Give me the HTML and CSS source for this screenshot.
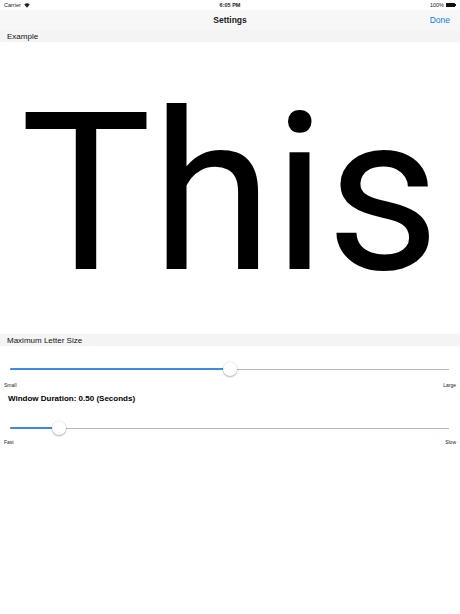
FILE: index.html
```html
<!DOCTYPE html>
<html>
<head>
<meta charset="utf-8">
<link rel="stylesheet" href="styles.css">
</head>
<body>
<div class="status">
  <div class="status-left">Carrier
    <svg class="wifi" width="6" height="5" viewBox="0 0 12 10"><path d="M6 9.5 L0.5 3.2 A8 8 0 0 1 11.5 3.2 Z" fill="#222"/></svg>
  </div>
  <div class="status-time">6:05 PM</div>
  <div class="status-right">100% <span class="battery"><span class="battery-body"></span><span class="battery-nub"></span></span></div>
</div>
<div class="nav">
  <div class="nav-title">Settings</div>
  <div class="nav-done">Done</div>
</div>
<div class="section-header">Example</div>
<div class="example"><span class="example-text">This</span></div>
<div class="section-header">Maximum Letter Size</div>
<div class="slider slider-first">
  <div class="track"></div>
  <div class="fill" style="width:50%"></div>
  <div class="thumb" style="left:50%"></div>
</div>
<div class="labels labels-first"><span>Small</span><span>Large</span></div>
<div class="duration">Window Duration: 0.50 (Seconds)</div>
<div class="slider slider-second">
  <div class="track"></div>
  <div class="fill" style="width:11.2%"></div>
  <div class="thumb" style="left:11.2%"></div>
</div>
<div class="labels"><span>Fast</span><span>Slow</span></div>
</body>
</html>
```
FILE: styles.css
```css
html, body {
  margin: 0;
  padding: 0;
  background: #fff;
}
body {
  width: 460px;
  height: 614px;
  font-family: "Liberation Sans", Arial, sans-serif;
  color: #000;
  overflow: hidden;
}
.status {
  height: 10px;
  display: flex;
  align-items: center;
  justify-content: space-between;
  padding: 0 4px 0 4px;
  font-size: 5.5px;
  color: #222;
  position: relative;
}
.status-left {
  display: flex;
  align-items: center;
  gap: 3px;
}
.status-time {
  position: absolute;
  left: 0;
  right: 0;
  text-align: center;
  font-weight: bold;
}
.status-right {
  display: flex;
  align-items: center;
  gap: 2px;
}
.battery {
  display: flex;
  align-items: center;
}
.battery-body {
  width: 9px;
  height: 4px;
  background: #111;
  border-radius: 0.5px;
}
.battery-nub {
  width: 1px;
  height: 2px;
  background: #111;
}
.nav {
  height: 20px;
  background: #f7f7f7;
  display: flex;
  align-items: center;
  justify-content: flex-end;
  position: relative;
  padding-right: 10px;
}
.nav-title {
  position: absolute;
  left: 0;
  right: 0;
  text-align: center;
  font-size: 8.5px;
  font-weight: bold;
  color: #1a1a1a;
}
.nav-done {
  font-size: 8.5px;
  color: #0a7bff;
  position: relative;
}
.section-header {
  height: 12px;
  line-height: 13px;
  background: #f4f4f4;
  font-size: 8px;
  padding-left: 7px;
  color: #111;
}
.example {
  height: 292px;
  text-align: center;
  overflow: hidden;
}
.example-text {
  display: block;
  font-family: Roboto, "Liberation Sans", sans-serif;
  font-size: 220px;
  line-height: 220px;
  margin-top: 42px;
  margin-left: 0;
}
.slider {
  position: relative;
  height: 20px;
  margin: 0 11px 0 10px;
}
.slider-first {
  margin-top: 13px;
}
.slider-second {
  margin-top: 14px;
}
.track {
  position: absolute;
  left: 0;
  right: 0;
  top: 9.5px;
  height: 1px;
  background: #b7b7b7;
}
.fill {
  position: absolute;
  left: 0;
  top: 9px;
  height: 2px;
  background: #3a8be6;
  border-radius: 1px;
}
.thumb {
  position: absolute;
  top: 3px;
  width: 14px;
  height: 14px;
  margin-left: -7px;
  border-radius: 50%;
  background: #fff;
  box-shadow: 0 1px 2px rgba(0,0,0,0.3), 0 0 0 0.5px rgba(0,0,0,0.08);
}
.labels {
  height: 8px;
  line-height: 8px;
  display: flex;
  justify-content: space-between;
  padding: 0 4px;
  font-size: 5px;
  color: #222;
}
.labels-first {
  margin-top: 2px;
}
.duration {
  height: 10px;
  line-height: 10px;
  margin-top: 5px;
  padding-left: 8px;
  font-size: 8px;
  font-weight: bold;
}
```
